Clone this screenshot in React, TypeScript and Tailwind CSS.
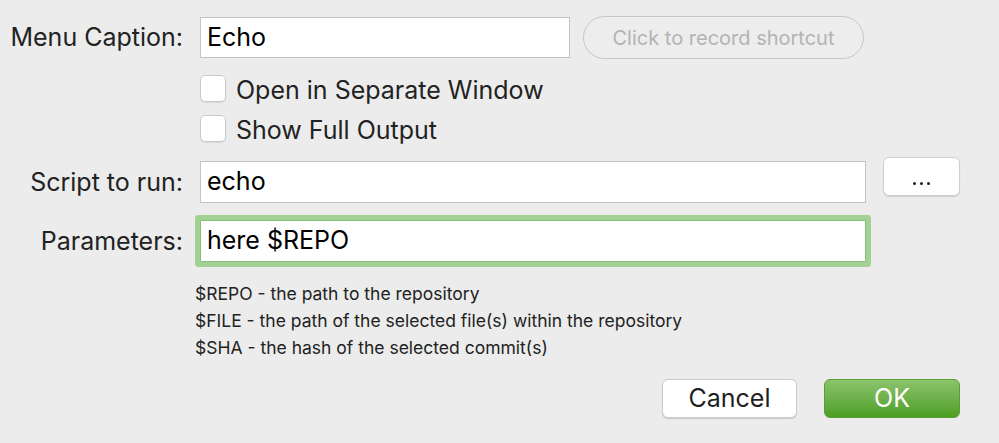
import React from "react";

const font = { fontFamily: "Inter, 'Helvetica Neue', Arial, sans-serif" };

function Label({ children }: { children: React.ReactNode }) {
  return (
    <div className="w-[183px] shrink-0 text-right text-[25px] leading-none text-[#222]">{children}</div>
  );
}

function Checkbox({ label }: { label: string }) {
  return (
    <label className="flex items-center gap-[10px] h-[27px]">
      <span className="w-[26px] h-[27px] rounded-[5px] bg-white border border-[#c9c9c9] shadow-[0_1px_1px_rgba(0,0,0,0.08)]" />
      <span className="text-[25px] leading-none text-[#222] translate-y-[2px]">{label}</span>
    </label>
  );
}

export default function App() {
  return (
    <div className="w-[999px] h-[443px] bg-[#ececec] overflow-hidden" style={font}>
      <div className="pt-[16px] flex flex-col">
        {/* Menu caption */}
        <div className="flex items-center gap-[17px] h-[43px]">
          <Label>Menu Caption:</Label>
          <div className="w-[370px] h-[41px] bg-white border border-[#c3c3c3] flex items-center px-[6px] text-[25px] text-black">
            Echo
          </div>
          <button className="-ml-[4px] w-[281px] h-[43px] rounded-full border border-[#c6c6c6] bg-[#ededed] text-[20px] text-[#b3b3b3]">
            Click to record shortcut
          </button>
        </div>

        {/* Checkboxes */}
        <div className="pl-[200px] mt-[16px] flex flex-col gap-[13px]">
          <Checkbox label="Open in Separate Window" />
          <Checkbox label="Show Full Output" />
        </div>

        {/* Script */}
        <div className="flex items-center gap-[17px] mt-[19px] h-[42px]">
          <Label>Script to run:</Label>
          <div className="w-[666px] h-[42px] bg-white border border-[#c3c3c3] flex items-center px-[6px] text-[25px] text-black">
            echo
          </div>
          <button className="self-start -mt-[4px] w-[77px] h-[39px] rounded-[6px] bg-white border border-[#cfcfcf] shadow-[0_1px_1px_rgba(0,0,0,0.12)] flex items-end justify-center pb-[10px]">
            <span className="flex gap-[4px]">
              <span className="w-[3px] h-[3px] rounded-full bg-[#222]" />
              <span className="w-[3px] h-[3px] rounded-full bg-[#222]" />
              <span className="w-[3px] h-[3px] rounded-full bg-[#222]" />
            </span>
          </button>
        </div>

        {/* Parameters */}
        <div className="flex items-center gap-[17px] mt-[17px] h-[42px]">
          <Label>Parameters:</Label>
          <div className="w-[666px] h-[42px] bg-white border border-[#86bf77] shadow-[0_0_0_5px_#a3d194] rounded-[1px] flex items-center px-[6px] text-[25px] text-black">
            here $REPO
          </div>
        </div>

        {/* Help */}
        <div className="pl-[195px] mt-[18px] flex flex-col text-[17.5px] leading-[27px] text-[#222]">
          <span>$REPO - the path to the repository</span>
          <span>$FILE - the path of the selected file(s) within the repository</span>
          <span>$SHA - the hash of the selected commit(s)</span>
        </div>

        {/* Buttons */}
        <div className="flex justify-end gap-[27px] pr-[39px] mt-[18px]">
          <button className="w-[135px] h-[39px] rounded-[6px] bg-white border border-[#cbcbcb] shadow-[0_1px_1px_rgba(0,0,0,0.15)] text-[25px] leading-none text-[#1f1f1f]">
            Cancel
          </button>
          <button className="w-[136px] h-[39px] rounded-[6px] bg-gradient-to-b from-[#8cc46c] to-[#4c9e20] border border-[#5a9f35] text-[25px] leading-none text-white">
            OK
          </button>
        </div>
      </div>
    </div>
  );
}
